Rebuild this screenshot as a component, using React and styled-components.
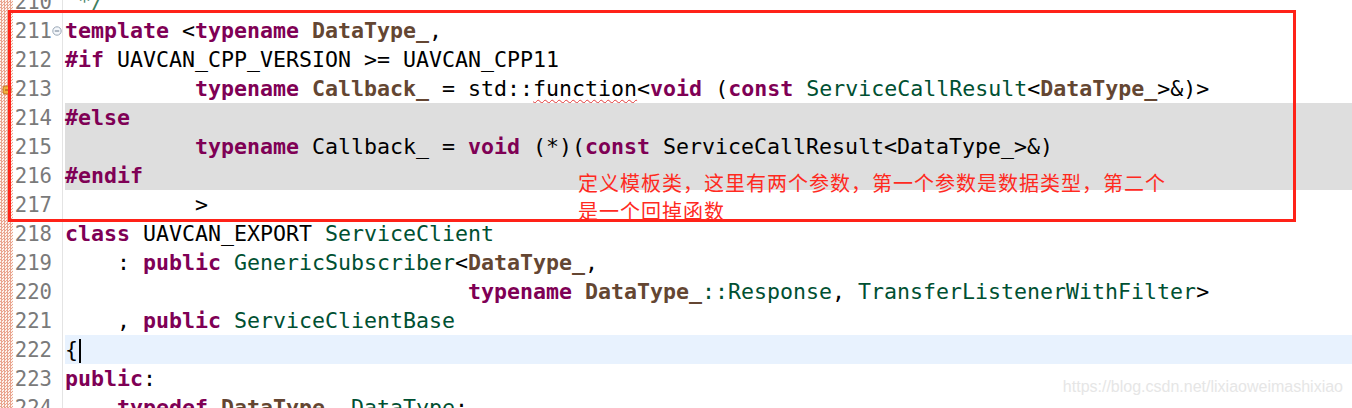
import React from "react";
import styled, { createGlobalStyle } from "styled-components";

const Global = createGlobalStyle`
  html, body { margin: 0; padding: 0; background: #ffffff; }
  body { width: 1352px; height: 408px; overflow: hidden; }
`;

const Page = styled.div`
  position: relative;
  width: 1352px;
  height: 408px;
  overflow: hidden;
  background: #fff;
`;

const Editor = styled.div`
  display: flex;
  margin-top: -13px;
  font-family: "DejaVu Sans Mono", monospace;
  font-size: 21.6px;
`;

const Stripe = styled.div`
  width: 13px;
  flex: none;
  background-color: #fbe3d8;
  background-image: repeating-conic-gradient(#e9a58f 0% 25%, #fdf3ee 0% 50%);
  background-size: 3px 3px;
`;

const Gutter = styled.div`
  display: flex;
  flex-direction: column;
  width: 49px;
  flex: none;
  border-right: 1px solid #e4e4e4;
`;

const NumRow = styled.div`
  display: flex;
  align-items: center;
  height: 29px;
`;

const Num = styled.span`
  width: 39px;
  text-align: right;
  color: #7a7a7a;
  font-size: 20.6px;
`;

const FoldSlot = styled.span`
  width: 10px;
  display: flex;
  justify-content: center;
  align-items: center;
`;

const Code = styled.div`
  flex: 1;
  display: flex;
  flex-direction: column;
  padding-left: 2px;
`;

const Row = styled.div`
  height: 29px;
  line-height: 29px;
  white-space: pre;
  color: #000;
  background: ${(p) =>
    p.$hl === "inactive" ? "#dedede" : p.$hl === "current" ? "#e8f2fe" : "transparent"};
`;

const colors = {
  kw: "#7f0055",
  tp: "#644632",
  cls: "#005032",
  cm: "#3f7f5f",
  plain: "#000000",
};

const Tok = styled.span`
  color: ${(p) => colors[p.$k] || "#000"};
  font-weight: ${(p) => (p.$k === "kw" || p.$k === "tp" ? "bold" : "normal")};
  ${(p) =>
    p.$err
      ? `text-decoration: underline wavy #e23a3a; text-decoration-thickness: 1px; text-underline-offset: 3px; text-decoration-skip-ink: none;`
      : ""}
`;

const Caret = styled.span`
  display: inline-block;
  width: 1.5px;
  height: 24px;
  background: #000;
  vertical-align: middle;
  margin-left: 1px;
`;

const RedBox = styled.div`
  position: absolute;
  left: 8px;
  top: 10px;
  width: 1282px;
  height: 206px;
  border: 3px solid #ff2218;
  pointer-events: none;
`;

const Note = styled.div`
  position: absolute;
  left: 578px;
  top: 169px;
  width: 600px;
  font-family: "Noto Sans CJK SC", "Noto Sans", sans-serif;
  font-size: 20px;
  font-weight: 400;
  letter-spacing: 1px;
  line-height: 28px;
  color: #ff2a1f;
`;

const Watermark = styled.div`
  position: absolute;
  right: 9px;
  top: 378px;
  font-family: "Liberation Sans", Arial, sans-serif;
  font-size: 16px;
  color: #e6e6e6;
`;

const Marker = styled.div`
  position: absolute;
  left: 2px;
  top: 82px;
  width: 10px;
  height: 12px;
`;

const FoldIcon = () => (
  <svg width="10" height="10" viewBox="0 0 10 10">
    <circle cx="5" cy="5" r="4.2" fill="#f4f7fb" stroke="#9aa7b6" strokeWidth="1" />
    <line x1="2.8" y1="5" x2="7.2" y2="5" stroke="#6b7a8c" strokeWidth="1" />
  </svg>
);

const sp = (n) => " ".repeat(n);

const lines = [
  { n: 210, t: [["cm", " */"]] },
  { n: 211, fold: true, t: [["kw", "template"], ["plain", " <"], ["kw", "typename"], ["plain", " "], ["tp", "DataType_"], ["plain", ","]] },
  { n: 212, t: [["kw", "#if"], ["plain", " UAVCAN_CPP_VERSION >= UAVCAN_CPP11"]] },
  {
    n: 213,
    t: [
      ["plain", sp(10)], ["kw", "typename"], ["plain", " "], ["tp", "Callback_"], ["plain", " = std::"],
      ["plain", "function", true], ["plain", "<"], ["kw", "void"], ["plain", " ("], ["kw", "const"], ["plain", " "],
      ["cls", "ServiceCallResult"], ["plain", "<"], ["tp", "DataType_"], ["plain", ">&)>"],
    ],
  },
  { n: 214, hl: "inactive", t: [["kw", "#else"]] },
  {
    n: 215,
    hl: "inactive",
    t: [
      ["plain", sp(10)], ["kw", "typename"], ["plain", " Callback_ = "], ["kw", "void"], ["plain", " (*)("],
      ["kw", "const"], ["plain", " ServiceCallResult<DataType_>&)"],
    ],
  },
  { n: 216, hl: "inactive", t: [["kw", "#endif"]] },
  { n: 217, t: [["plain", sp(10) + ">"]] },
  { n: 218, t: [["kw", "class"], ["plain", " UAVCAN_EXPORT "], ["cls", "ServiceClient"]] },
  { n: 219, t: [["plain", sp(4) + ": "], ["kw", "public"], ["plain", " "], ["cls", "GenericSubscriber"], ["plain", "<"], ["tp", "DataType_"], ["plain", ","]] },
  {
    n: 220,
    t: [
      ["plain", sp(31)], ["kw", "typename"], ["plain", " "], ["tp", "DataType_"], ["cls", "::Response"],
      ["plain", ", "], ["cls", "TransferListenerWithFilter"], ["plain", ">"],
    ],
  },
  { n: 221, t: [["plain", sp(4) + ", "], ["kw", "public"], ["plain", " "], ["cls", "ServiceClientBase"]] },
  { n: 222, hl: "current", caret: true, t: [["plain", "{"]] },
  { n: 223, t: [["kw", "public"], ["plain", ":"]] },
  { n: 224, t: [["plain", sp(4)], ["kw", "typedef"], ["plain", " "], ["tp", "DataType_"], ["plain", " "], ["cls", "DataType"], ["plain", ";"]] },
];

export default function App() {
  return (
    <Page>
      <Global />
      <Editor>
        <Stripe />
        <Gutter>
          {lines.map((l) => (
            <NumRow key={l.n}>
              <Num>{l.n}</Num>
              <FoldSlot>{l.fold ? <FoldIcon /> : null}</FoldSlot>
            </NumRow>
          ))}
        </Gutter>
        <Code>
          {lines.map((l) => (
            <Row key={l.n} $hl={l.hl}>
              {l.t.map(([k, s, err], i) => (
                <Tok key={i} $k={k} $err={err}>
                  {s}
                </Tok>
              ))}
              {l.caret ? <Caret /> : null}
            </Row>
          ))}
        </Code>
      </Editor>
      <Marker>
        <svg width="10" height="12" viewBox="0 0 10 12">
          <rect x="1" y="2" width="8" height="8" rx="2" fill="#f0b040" stroke="#c07020" strokeWidth="1" />
          <line x1="3" y1="6" x2="7" y2="6" stroke="#a04010" strokeWidth="1" />
        </svg>
      </Marker>
      <RedBox />
      <Note>
        定义模板类，这里有两个参数，第一个参数是数据类型，第二个
        <br />
        是一个回掉函数
      </Note>
      <Watermark>https://blog.csdn.net/lixiaoweimashixiao</Watermark>
    </Page>
  );
}
